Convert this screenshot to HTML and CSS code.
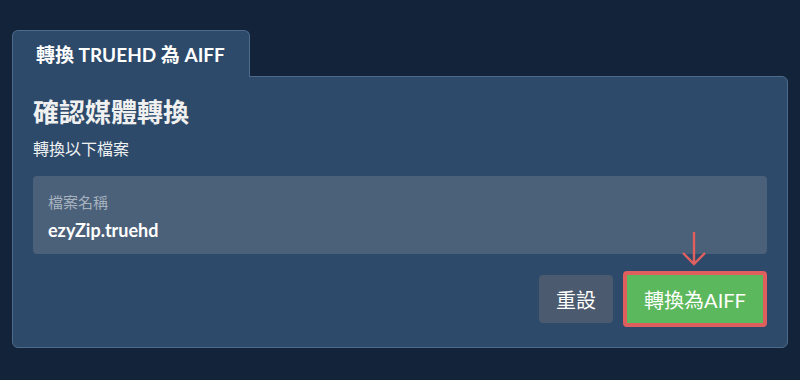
FILE: index.html
```html
<!DOCTYPE html>
<html lang="zh-Hant">
<head>
    <meta charset="UTF-8">
    <title>轉換 TRUEHD 為 AIFF</title>
    <link rel="stylesheet" href="styles.css">
</head>
<body>
    <div class="wrap">
        <!-- Tab -->
        <div class="tab">轉換 TRUEHD 為 AIFF</div>

        <!-- Panel -->
        <div class="panel">
            <h2 class="title">確認媒體轉換</h2>
            <p class="subtitle">轉換以下檔案</p>

            <div class="file-box">
                <div class="file-label">檔案名稱</div>
                <div class="file-name">ezyZip.truehd</div>
            </div>

            <div class="actions">
                <button class="btn btn-reset">重設</button>
                <div class="convert-wrap">
                    <svg class="arrow" width="30" height="36" viewBox="0 0 30 36">
                        <path d="M15 1 V33 M4 22 L15 33 L26 22" fill="none" stroke="#e06060" stroke-width="2.4"/>
                    </svg>
                    <button class="btn btn-convert">轉換為AIFF</button>
                </div>
            </div>
        </div>
    </div>
</body>
</html>
```

FILE: styles.css
```css
* {
    margin: 0;
    padding: 0;
    box-sizing: border-box;
}

body {
    background: #12233a;
    font-family: Lato, "Noto Sans CJK TC", sans-serif;
    color: #fff;
    width: 800px;
    height: 380px;
    overflow: hidden;
}

.wrap {
    padding: 30px 12px 0 12px;
}

.tab {
    width: 238px;
    height: 47px;
    background: #2d4a6a;
    border: 1px solid #4d6a8c;
    border-bottom: none;
    border-radius: 6px 6px 0 0;
    font-size: 19px;
    font-weight: 700;
    line-height: 24px;
    padding: 12px 0 0 23px;
    position: relative;
    z-index: 1;
    margin-bottom: -1px;
}

.panel {
    width: 776px;
    height: 272px;
    background: #2d4a6a;
    border: 1px solid #4d6a8c;
    border-radius: 0 6px 6px 6px;
    padding: 19px 20px 0 20px;
}

.title {
    font-size: 26px;
    font-weight: 700;
    color: #f0f0f0;
    line-height: 32px;
}

.subtitle {
    font-size: 16px;
    color: #eef0f2;
    margin-top: 11px;
    line-height: 20px;
}

.file-box {
    margin-top: 17px;
    height: 78px;
    background: #4b6079;
    border-radius: 4px;
    padding: 17px 15px 0 15px;
}

.file-label {
    font-size: 15px;
    color: #a7b2bf;
    line-height: 18px;
}

.file-name {
    font-size: 18px;
    font-weight: 700;
    color: #fff;
    margin-top: 8px;
    line-height: 22px;
}

.actions {
    display: flex;
    justify-content: flex-end;
    align-items: center;
    gap: 10px;
    margin-top: 17px;
}

.btn {
    border: none;
    font-family: Lato, "Noto Sans CJK TC", sans-serif;
    font-size: 20px;
    color: #fff;
    border-radius: 4px;
    cursor: pointer;
}

.btn-reset {
    width: 74px;
    height: 48px;
    background: #4b5a6e;
}

.convert-wrap {
    position: relative;
}

.btn-convert {
    width: 144px;
    height: 56px;
    background: #5cb85c;
    border: 4px solid #df5f5f;
    border-radius: 4px;
    display: block;
}

.arrow {
    position: absolute;
    left: 56px;
    top: -40px;
}
```
